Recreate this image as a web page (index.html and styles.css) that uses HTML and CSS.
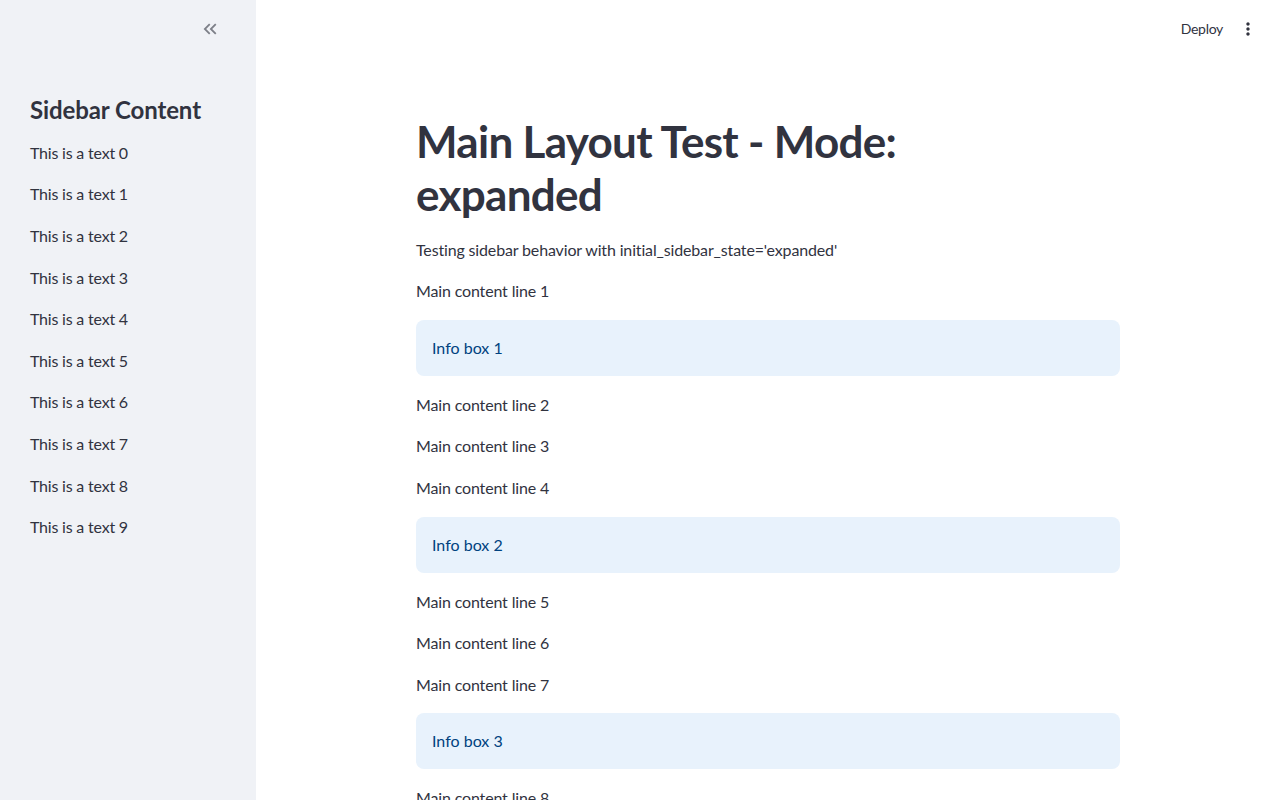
FILE: index.html
```html
<!DOCTYPE html>
<html lang="en">
<head>
<meta charset="utf-8">
<title>Main Layout Test</title>
<link rel="stylesheet" href="styles.css">
</head>
<body>
<div class="app">
  <aside class="sidebar">
    <div class="sidebar-header">
      <button class="icon-btn collapse" aria-label="Collapse sidebar">
        <svg viewBox="0 0 24 24" width="20" height="20"><path d="M17.59 18L19 16.59 14.42 12 19 7.41 17.59 6l-6 6z M11 18l1.41-1.41L7.83 12l4.58-4.59L11 6l-6 6z"/></svg>
      </button>
    </div>
    <div class="sidebar-content">
      <h2 class="sidebar-title">Sidebar Content</h2>
      <p class="text">This is a text 0</p>
      <p class="text">This is a text 1</p>
      <p class="text">This is a text 2</p>
      <p class="text">This is a text 3</p>
      <p class="text">This is a text 4</p>
      <p class="text">This is a text 5</p>
      <p class="text">This is a text 6</p>
      <p class="text">This is a text 7</p>
      <p class="text">This is a text 8</p>
      <p class="text">This is a text 9</p>
    </div>
  </aside>
  <main class="main">
    <header class="topbar">
      <button class="deploy">Deploy</button>
      <button class="icon-btn menu" aria-label="Main menu">
        <svg viewBox="0 0 24 24" width="20" height="20"><path d="M12 8c1.1 0 2-.9 2-2s-.9-2-2-2-2 .9-2 2 .9 2 2 2zm0 2c-1.1 0-2 .9-2 2s.9 2 2 2 2-.9 2-2-.9-2-2-2zm0 6c-1.1 0-2 .9-2 2s.9 2 2 2 2-.9 2-2-.9-2-2-2z"/></svg>
      </button>
    </header>
    <div class="block">
      <h1 class="title">Main Layout Test - Mode: expanded</h1>
      <p class="text">Testing sidebar behavior with initial_sidebar_state='expanded'</p>
      <p class="text">Main content line 1</p>
      <div class="info">Info box 1</div>
      <p class="text">Main content line 2</p>
      <p class="text">Main content line 3</p>
      <p class="text">Main content line 4</p>
      <div class="info">Info box 2</div>
      <p class="text">Main content line 5</p>
      <p class="text">Main content line 6</p>
      <p class="text">Main content line 7</p>
      <div class="info">Info box 3</div>
      <p class="text">Main content line 8</p>
      <p class="text">Main content line 9</p>
      <p class="text">Main content line 10</p>
    </div>
  </main>
</div>
</body>
</html>
```
FILE: styles.css
```css
* { box-sizing: border-box; }
html, body {
  margin: 0;
  height: 100%;
  overflow: hidden;
}
body {
  font-family: Lato, "Liberation Sans", sans-serif;
  color: rgb(49, 51, 63);
  background: #ffffff;
}
.app {
  display: flex;
  height: 800px;
}
.sidebar {
  width: 256px;
  flex: 0 0 256px;
  background: #f0f2f6;
  display: flex;
  flex-direction: column;
}
.sidebar-header {
  height: 60px;
  display: flex;
  align-items: center;
  justify-content: flex-end;
  padding-right: 30px;
  padding-bottom: 2px;
}
.icon-btn {
  border: none;
  background: transparent;
  padding: 0;
  width: 32px;
  height: 32px;
  display: flex;
  align-items: center;
  justify-content: center;
  cursor: pointer;
}
.collapse svg { fill: rgba(49, 51, 63, 0.6); width: 22px; height: 22px; }
.menu svg { fill: rgb(49, 51, 63); }
.sidebar-content {
  padding: 36px 30px 0;
  display: flex;
  flex-direction: column;
  gap: 16px;
}
.sidebar-title {
  margin: 0 0 -1px;
  font-size: 24px;
  font-weight: 700;
  line-height: 1.2;
  letter-spacing: -0.1px;
}
.text {
  margin: 0;
  font-size: 16px;
  line-height: 25.6px;
  letter-spacing: -0.2px;
}
.block .text { letter-spacing: -0.15px; }
.main {
  flex: 1;
  display: flex;
  flex-direction: column;
  overflow: hidden;
}
.topbar {
  height: 60px;
  flex: 0 0 60px;
  display: flex;
  align-items: center;
  justify-content: flex-end;
  padding-right: 16px;
  padding-bottom: 3px;
}
.deploy {
  border: none;
  background: transparent;
  font-family: inherit;
  font-size: 14px;
  letter-spacing: -0.3px;
  color: rgb(49, 51, 63);
  padding: 6px 9px 6px 8px;
  cursor: pointer;
}
.block {
  width: 704px;
  margin: 0 auto;
  padding-top: 55px;
  display: flex;
  flex-direction: column;
  gap: 16px;
}
.title {
  margin: 0;
  font-size: 44px;
  font-weight: 700;
  line-height: 52.8px;
  letter-spacing: -0.7px;
  width: 520px;
}
.info {
  background: #e8f2fc;
  color: #004280;
  border-radius: 8px;
  padding: 16px;
  font-size: 16px;
  line-height: 24px;
}
```
